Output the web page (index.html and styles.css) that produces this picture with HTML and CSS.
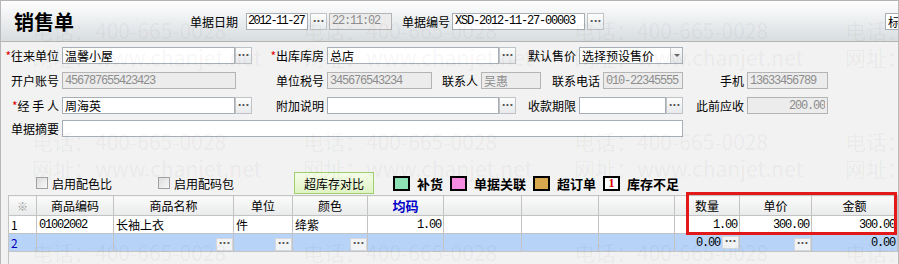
FILE: index.html
```html
<!DOCTYPE html>
<html lang="zh-CN">
<head>
    <meta charset="UTF-8">
    <meta name="viewport" content="width=device-width, initial-scale=1.0">
    <title>销售单</title>
    <link rel="stylesheet" href="styles.css">
</head>
<body>
<div class="page">

    <div class="head">
        <h1 class="title">销售单</h1>
        <label class="hl">单据日期</label>
        <input class="inp num w-date" value="2012-11-27"><button class="dots">···</button>
        <input class="inp num off w-time" value="22:11:02">
        <label class="hl hl-no">单据编号</label>
        <input class="inp num w-no" value="XSD-2012-11-27-00003"><button class="dots">···</button>
        <input class="inp w-tpl" value="标准">
    </div>

    <div class="form">
        <div class="row">
            <label class="lbl w61"><i>*</i>往来单位</label>
            <div class="pick w190"><input class="inp" value="温馨小屋"><button class="dots">···</button></div>
            <label class="lbl w75"><i>*</i>出库库房</label>
            <div class="pick w189"><input class="inp" value="总店"><button class="dots">···</button></div>
            <label class="lbl w63">默认售价</label>
            <div class="sel w104"><span>选择预设售价</span><b class="arrow"></b></div>
        </div>
        <div class="row">
            <label class="lbl w61">开户账号</label>
            <input class="inp num off w174" value="456787655423423">
            <label class="lbl w91">单位税号</label>
            <input class="inp num off w105" value="345676543234">
            <label class="lbl w49">联系人</label>
            <input class="inp off w60" value="吴惠">
            <label class="lbl w62">联系电话</label>
            <input class="inp num off w80" value="010-22345555">
            <label class="lbl w64">手机</label>
            <input class="inp num off w81" value="13633456789">
        </div>
        <div class="row">
            <label class="lbl w61 spaced"><i>*</i>经 手 人</label>
            <div class="pick w190"><input class="inp" value="周海英"><button class="dots">···</button></div>
            <label class="lbl w75">附加说明</label>
            <div class="pick w189"><input class="inp" value=""><button class="dots">···</button></div>
            <label class="lbl w63">收款期限</label>
            <div class="pick w104"><input class="inp" value=""><button class="dots">···</button></div>
            <label class="lbl w64">此前应收</label>
            <input class="inp num off right w81" value="200.00">
        </div>
        <div class="row memo">
            <label class="lbl w61">单据摘要</label>
            <input class="inp w621" value="">
        </div>
    </div>

    <div class="opts">
        <label class="chk"><span class="box"></span>启用配色比</label>
        <label class="chk chk-2"><span class="box"></span>启用配码包</label>
        <button class="cmp">超库存对比</button>
        <div class="legend">
            <span class="sw sw-green"></span><b>补货</b>
            <span class="sw sw-pink"></span><b>单据关联</b>
            <span class="sw sw-tan"></span><b>超订单</b>
            <span class="sw sw-one">1</span><b>库存不足</b>
        </div>
    </div>

    <div class="grid-wrap">
        <table class="grid">
            <colgroup>
                <col style="width:28px"><col style="width:77px"><col style="width:120px">
                <col style="width:59px"><col style="width:75px"><col style="width:76px">
                <col style="width:78px"><col style="width:77px"><col style="width:76px">
                <col style="width:65px"><col style="width:72px"><col style="width:86px">
            </colgroup>
            <tr class="th">
                <td class="mark">※</td><td>商品编码</td><td>商品名称</td><td>单位</td><td>颜色</td>
                <td class="size">均码</td><td></td><td></td><td></td>
                <td>数量</td><td>单价</td><td>金额</td>
            </tr>
            <tr>
                <td class="no">1</td><td class="num">01002002</td><td>长袖上衣</td><td>件</td><td>绛紫</td>
                <td class="num r">1.00</td><td></td><td></td><td></td>
                <td class="num r">1.00</td><td class="num r">300.00</td><td class="num r">300.00</td>
            </tr>
            <tr class="cur">
                <td class="no">2</td><td></td>
                <td class="r"><span class="cbtn">···</span></td>
                <td class="r"><span class="cbtn">···</span></td>
                <td class="r"><span class="cbtn">···</span></td>
                <td></td><td></td><td></td><td></td>
                <td class="num r">0.00<span class="cbtn">···</span></td>
                <td class="r"><span class="cbtn">···</span></td>
                <td class="num r">0.00</td>
            </tr>
        </table>
    </div>

    <!-- red frame around qty / price / amount -->
    <div class="hilite"></div>

    <!-- faint watermark over the whole form -->
    <div class="wm">
        <div class="tile"><p>电话：400-665-0028</p><p>网址：www.chanjet.net</p></div>
        <div class="tile"><p>电话：400-665-0028</p><p>网址：www.chanjet.net</p></div>
        <div class="tile"><p>电话：400-665-0028</p><p>网址：www.chanjet.net</p></div>
        <div class="tile"><p>电话：400-665-0028</p><p>网址：www.chanjet.net</p></div>
        <div class="tile"><p>电话：400-665-0028</p><p>网址：www.chanjet.net</p></div>
        <div class="tile"><p>电话：400-665-0028</p><p>网址：www.chanjet.net</p></div>
        <div class="tile"><p>电话：400-665-0028</p><p>网址：www.chanjet.net</p></div>
        <div class="tile"><p>电话：400-665-0028</p><p>网址：www.chanjet.net</p></div>
        <div class="tile"><p>电话：400-665-0028</p><p>网址：www.chanjet.net</p></div>
        <div class="tile"><p>电话：400-665-0028</p><p>网址：www.chanjet.net</p></div>
        <div class="tile"><p>电话：400-665-0028</p><p>网址：www.chanjet.net</p></div>
        <div class="tile"><p>电话：400-665-0028</p><p>网址：www.chanjet.net</p></div>
    </div>
</div>
</body>
</html>
```

FILE: styles.css
```css
body, html {
    margin: 0;
    width: 100%;
    height: 100%;
    background: #f2f2f2;
}
body {
    font: 12px "Noto Sans CJK SC", sans-serif;
    color: #000;
}
.page {
    position: relative;
    width: 897px;
    height: 264px;
    background: #f2f2f2;
    border-left: 1px solid #b9b9b9;
    border-right: 1px solid #b9b9b9;
    overflow: hidden;
}

/* inputs */
.inp {
    box-sizing: border-box;
    height: 17px;
    margin: 0;
    padding: 0 2px;
    border: 1px solid #a7aeb6;
    background: #fff;
    font: 12px "Noto Sans CJK SC", sans-serif;
    color: #000;
    outline: none;
}
.num {
    font-family: "Liberation Mono", monospace;
    letter-spacing: -1.2px;
}
.off {
    background: #ececec;
    border-color: #b4b4b4;
    color: #8c8c8c;
}
.right { text-align: right; }
.dots {
    box-sizing: border-box;
    width: 17px;
    height: 17px;
    margin: 0 0 0 2px;
    padding: 0;
    border: 1px solid #bfc3c8;
    background: linear-gradient(#fdfdfd, #e7e9eb);
    font: bold 10px "DejaVu Sans", sans-serif;
    color: #555;
    line-height: 13px;
}
.pick .dots { margin: 0; }

/* header bar */
.head {
    height: 40px;
    border-top: 1px solid #b3b3b3;
    border-bottom: 1px solid #b3b3b3;
    background: linear-gradient(#fefefe, #d8dde0);
    display: flex;
    align-items: center;
    white-space: nowrap;
}
.head > * { flex-shrink: 0; }
.title {
    margin: 0 0 0 13px;
    width: 176px;
    font-size: 20px;
    font-weight: bold;
}
.hl {
    margin-right: 8px;
}
.head .hl-no {
    margin-left: 10px;
    margin-right: 2px;
}
.head .w-date { width: 62px; padding: 0 1px; letter-spacing: -1.6px; }
.head .w-time { width: 63px; margin-left: 2px; }
.head .w-no { width: 133px; }
.head .w-tpl { width: 40px; margin-left: 281px; }

/* form rows */
.form {
    padding-top: 5px;
}
.row {
    display: flex;
    align-items: center;
    height: 17px;
    margin-bottom: 8px;
    white-space: nowrap;
}
.row > * { flex-shrink: 0; }
.row.memo { margin-top: -2px; }
.lbl {
    box-sizing: border-box;
    text-align: right;
    padding-right: 3px;
}
.lbl i {
    font-style: normal;
    color: #d00;
}
.spaced { white-space: pre; }
.pick { display: flex; }
.pick .inp { flex: 1; min-width: 0; }
.sel {
    box-sizing: border-box;
    display: flex;
    justify-content: space-between;
    height: 17px;
    border: 1px solid #a7aeb6;
    background: #fff;
    padding-left: 2px;
    line-height: 15px;
}
.arrow {
    width: 11px;
    border-left: 1px solid #c6c9cc;
    background: linear-gradient(#fafafa, #e4e6e8);
    position: relative;
}
.arrow:after {
    content: "";
    position: absolute;
    left: 3px;
    top: 6px;
    border: 3px solid transparent;
    border-top: 3px solid #666;
}

.w60 { width: 60px; }
.w61 { width: 61px; }
.w62 { width: 62px; }
.w63 { width: 63px; }
.w64 { width: 64px; }
.w49 { width: 49px; }
.w75 { width: 75px; }
.w80 { width: 80px; }
.w81 { width: 81px; }
.w91 { width: 91px; }
.w104 { width: 104px; }
.w105 { width: 105px; }
.w174 { width: 174px; }
.w189 { width: 189px; }
.w190 { width: 190px; }
.w621 { width: 621px; }

/* options line */
.opts {
    display: flex;
    align-items: center;
    height: 22px;
    margin-top: 35px;
    white-space: nowrap;
}
.chk {
    display: flex;
    align-items: center;
    margin-left: 35px;
    gap: 4px;
}
.chk-2 { margin-left: 46px; }
.box {
    box-sizing: border-box;
    width: 12px;
    height: 12px;
    border: 1px solid #a0a0a0;
    background: linear-gradient(135deg, #dcdcdc, #f8f8f8);
}
.cmp {
    box-sizing: border-box;
    width: 80px;
    height: 22px;
    margin-left: 60px;
    padding: 0;
    border: 1px solid #9fcf6f;
    background: linear-gradient(#f6fde9, #dff2c4);
    font: 12px "Noto Sans CJK SC", sans-serif;
    color: #000;
}
.legend {
    display: flex;
    align-items: center;
    margin-left: 19px;
    font-size: 13px;
}
.legend b { margin: 0 7px 0 7px; }
.sw {
    box-sizing: border-box;
    width: 17px;
    height: 15px;
    border: 2px solid #000;
}
.sw-green { background: #8de3b6; }
.sw-pink { background: #f58ce2; }
.sw-tan { background: #d9a84e; }
.sw-one {
    background: #fff;
    color: #d00;
    font: bold 12px "Liberation Serif", serif;
    text-align: center;
    line-height: 11px;
}

/* grid */
.grid-wrap {
    margin: 1px 0 0 7px;
    height: 80px;
    border-left: 1px solid #c3c3c3;
}
.grid {
    border-collapse: collapse;
    table-layout: fixed;
    width: 889px;
    margin-left: -1px;
}
.grid td {
    height: 17px;
    padding: 0 2px;
    border: 1px solid #c3c3c3;
    background: #fff;
    white-space: nowrap;
    overflow: hidden;
}
.grid .th td {
    height: 19px;
    text-align: center;
    background: linear-gradient(#fbfbfb, #e9eaeb);
}
.grid .th .mark { color: #999; font-size: 11px; }
.grid .th .size { color: #0000c8; font-weight: bold; font-size: 13px; }
.grid .num {
    font-family: "Liberation Mono", monospace;
    letter-spacing: -1.2px;
}
.grid .r { text-align: right; }
.grid .no { padding-left: 2px; }
.grid .cur td { background: #b7d3f7; }
.grid .cur .no { color: #0000c0; }
.cbtn {
    display: inline-block;
    box-sizing: border-box;
    width: 17px;
    height: 13px;
    margin: 0 -2px 0 2px;
    border: 1px solid #d4d8dc;
    background: #f2f3f4;
    font: bold 10px "DejaVu Sans", sans-serif;
    color: #555;
    text-align: center;
    line-height: 10px;
    letter-spacing: 0;
    vertical-align: middle;
}

/* overlays */
.hilite {
    position: absolute;
    left: 685px;
    top: 192px;
    width: 205px;
    height: 37px;
    border: 3px solid #e31818;
}
.wm {
    position: absolute;
    left: 31px;
    top: 17px;
    width: 1100px;
    display: flex;
    flex-wrap: wrap;
    pointer-events: none;
}
.tile {
    width: 271px;
    height: 111px;
}
.tile p {
    margin: 0;
    height: 27px;
    font: 21px "Noto Sans CJK SC", sans-serif;
    line-height: 27px;
    color: rgba(0, 0, 0, 0.05);
    white-space: nowrap;
}
```
